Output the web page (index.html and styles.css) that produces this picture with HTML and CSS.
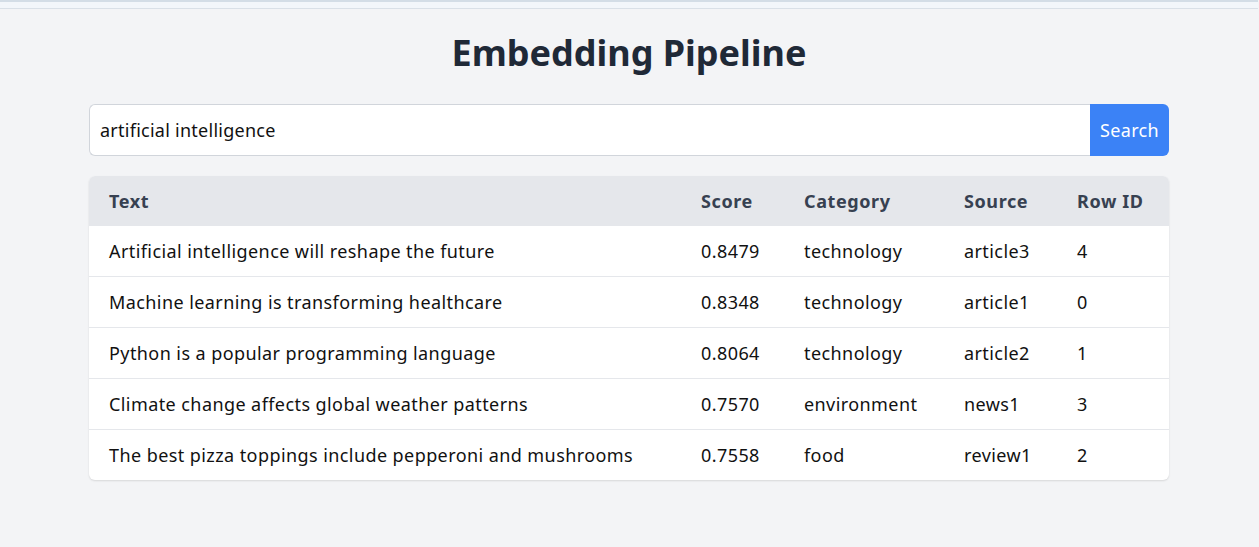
FILE: index.html
```html
<!DOCTYPE html>
<html lang="en">
<head>
<meta charset="utf-8">
<title>Embedding Pipeline</title>
<link rel="stylesheet" href="styles.css">
</head>
<body>
<div class="topbar"></div>
<main class="container">
  <h1 class="title">Embedding Pipeline</h1>
  <form class="search">
    <input class="search-input" type="text" value="artificial intelligence">
    <button class="search-btn" type="button">Search</button>
  </form>
  <div class="table-wrap">
    <table class="results">
      <colgroup>
        <col class="c-text"><col class="c-score"><col class="c-cat"><col class="c-src"><col class="c-id">
      </colgroup>
      <thead>
        <tr><th>Text</th><th>Score</th><th>Category</th><th>Source</th><th>Row ID</th></tr>
      </thead>
      <tbody>
        <tr><td>Artificial intelligence will reshape the future</td><td>0.8479</td><td>technology</td><td>article3</td><td>4</td></tr>
        <tr><td>Machine learning is transforming healthcare</td><td>0.8348</td><td>technology</td><td>article1</td><td>0</td></tr>
        <tr><td>Python is a popular programming language</td><td>0.8064</td><td>technology</td><td>article2</td><td>1</td></tr>
        <tr><td>Climate change affects global weather patterns</td><td>0.7570</td><td>environment</td><td>news1</td><td>3</td></tr>
        <tr><td>The best pizza toppings include pepperoni and mushrooms</td><td>0.7558</td><td>food</td><td>review1</td><td>2</td></tr>
      </tbody>
    </table>
  </div>
</main>
</body>
</html>
```
FILE: styles.css
```css
* { box-sizing: border-box; }
html, body { margin: 0; padding: 0; }
body {
  background: #f3f4f6;
  font-family: "Noto Sans", "Open Sans", sans-serif;
  color: #111827;
  height: 547px;
  padding-right: 1px;
}
.topbar {
  height: 9px;
  background: #f2f6fa;
  border-top: 2px solid #d3dde6;
  border-bottom: 1px solid #d9e0e7;
}
.container {
  width: 1080px;
  margin: 0 auto;
  padding-top: 22px;
}
.title {
  margin: 0 0 29px;
  text-align: center;
  font-size: 36px;
  line-height: 44px;
  font-weight: 700;
  color: #1f2937;
}
.search {
  display: flex;
  margin: 0 0 20px;
}
.search-input {
  flex: 1;
  height: 52px;
  padding: 0 10px;
  font: inherit;
  font-size: 18px;
  letter-spacing: 0.26px;
  color: #111;
  background: #fff;
  border: 1px solid #d1d5db;
  border-right: none;
  border-radius: 6px 0 0 6px;
  outline: none;
}
.search-btn {
  width: 79px;
  height: 52px;
  font: inherit;
  font-size: 18px;
  letter-spacing: 0.3px;
  color: #fff;
  background: #3b82f6;
  border: none;
  border-radius: 0 6px 6px 0;
  padding: 0;
}
.table-wrap {
  background: #fff;
  border-radius: 6px;
  overflow: hidden;
  box-shadow: 0 1px 2px rgba(0,0,0,0.12);
}
.results {
  width: 100%;
  border-collapse: collapse;
  table-layout: fixed;
  font-size: 18px;
}
.c-text { width: 592px; }
.c-score { width: 103px; }
.c-cat { width: 160px; }
.c-src { width: 113px; }
.c-id { width: 112px; }
.results th {
  background: #e5e7eb;
  color: #374151;
  font-weight: 700;
  letter-spacing: 0.6px;
  text-align: left;
  height: 50px;
  padding: 0 20px;
}
.results td {
  height: 51px;
  padding: 0 20px;
  border-top: 1px solid #e5e7eb;
  color: #111;
  letter-spacing: 0.42px;
  white-space: nowrap;
}
.results tbody tr:first-child td { border-top: none; height: 50px; }
```
